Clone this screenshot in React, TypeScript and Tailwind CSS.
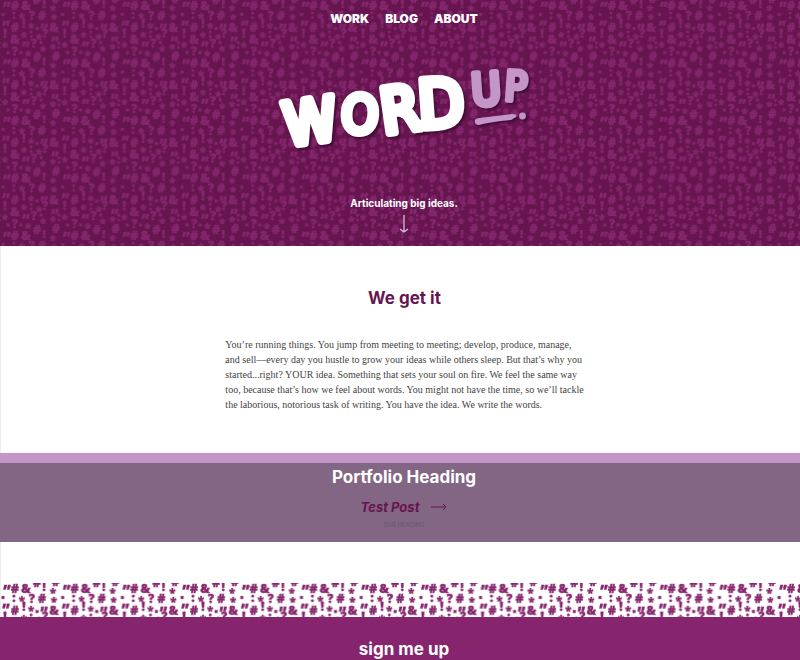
import React from "react";

type Glyph = [string, number, number];

const glyphs: Glyph[] = [
  ["”", 7, 8], ["#", 15, 10], ["&", 26, 10], ["!", 44, 8], ["*", 53, 11], ["¨", 55, 9],
  [":", 14, 19], ["*", 22, 19], ["?", 32, 20], ["#", 42, 20], ["*", 54, 20], ["▪", 3, 18],
  ["”", 6, 27], ["#", 15, 32], ["!", 24, 28], ["*", 31, 29], ["▪", 37, 32], ["”", 44, 30], ["&", 54, 32],
  ["!", 5, 38], ["&", 15, 44], ["*", 24, 38], [":", 31, 38], ["*", 39, 40], ["?", 45, 38], ["”", 55, 43],
  ["*", 5, 48], ["”", 26, 48], ["?", 34, 48], ["▪", 41, 46], ["*", 43, 52], ["*", 53, 50], [":", 59, 49],
  ["▪", 8, 56], ["?", 15, 56], ["▪", 21, 56], ["*", 28, 56], ["#", 37, 61], ["#", 56, 60],
];

function Punctuation({ id, color, className }: { id: string; color: string; className: string }) {
  return (
    <svg aria-hidden="true" className={className}>
      <defs>
        <pattern id={id} width="59.7" height="57.5" patternUnits="userSpaceOnUse">
          {glyphs.flatMap(([char, x, y], i) =>
            [-59.7, 0, 59.7].flatMap((dx) =>
              [-57.5, 0].map((dy) =>
                char === "▪" ? (
                  <rect key={`${i}${dx}${dy}`} x={x + dx - 1.5} y={y + dy - 5} width="3" height="3" fill={color} />
                ) : (
                  <text
                    key={`${i}${dx}${dy}`}
                    x={x + dx}
                    y={y + dy + (char === "*" ? 3 : char === "”" ? 5 : 0)}
                    fill={color}
                    stroke={color}
                    strokeWidth={char === "*" ? 0.2 : 0.4}
                    textAnchor="middle"
                    fontFamily="'Open Sans', sans-serif"
                    fontWeight="800"
                    fontSize={char === "”" ? 15 : 12}
                  >
                    {char}
                  </text>
                ),
              ),
            ),
          )}
        </pattern>
      </defs>
      <rect width="100%" height="100%" fill={`url(#${id})`} />
    </svg>
  );
}

const logo = [
  { char: "W", x: 310, y: 119, size: 59, turn: -8, color: "#ffffff", stroke: 8 },
  { char: "O", x: 360, y: 112, size: 52, turn: 4, color: "#ffffff", stroke: 7 },
  { char: "R", x: 400, y: 107, size: 62, turn: -8, color: "#ffffff", stroke: 8 },
  { char: "D", x: 441, y: 101, size: 66, turn: -4, color: "#ffffff", stroke: 8 },
  { char: "U", x: 486, y: 87, size: 44, turn: -4, color: "#c496c8", stroke: 6 },
  { char: "P", x: 516, y: 84, size: 41, turn: 4, color: "#c496c8", stroke: 5 },
];

function Logo() {
  return (
    <svg role="img" aria-label="Word Up" viewBox="272 56 264 100" className="mt-7 h-[100px] w-[264px] overflow-visible">
      <g style={{ filter: "drop-shadow(2px 2px 1px #3f0b35)" }}>
        {logo.map((l) => (
          <text
            key={l.char}
            x={l.x}
            y={l.y + l.size * 0.36}
            transform={`rotate(${l.turn} ${l.x} ${l.y})`}
            textAnchor="middle"
            fontFamily="'DejaVu Sans Condensed', 'Open Sans', sans-serif"
            fontSize={l.size}
            fontWeight="400"
            fill={l.color}
            stroke={l.color}
            strokeWidth={l.stroke}
            strokeLinejoin="round"
            strokeLinecap="round"
          >
            {l.char}
          </text>
        ))}
        <path d="M398 112Q412 119 428 121" fill="none" stroke="#ffffff" strokeWidth="4" strokeLinecap="round" />
        <path d="M475 118Q476 116 480 116L512 112Q518 112 516 115L511 118Q490 120 479 123Q474 123 475 118Z" fill="#c496c8" />
        <circle cx="522.5" cy="114" r="3.4" fill="#c496c8" />
      </g>
    </svg>
  );
}

export default function App() {
  return (
    <div className="border-l border-[#ededed] bg-white text-center font-['Inter',sans-serif]">
      <header className="relative isolate -ml-px flex h-[246px] flex-col items-center overflow-hidden bg-[#66154f] pl-2">
        <Punctuation id="marks-dark" color="#84266d" className="absolute inset-0 -z-10 h-full w-full" />
        <nav className="flex gap-4 pt-2 text-xs leading-[22px] font-black text-white">
          <a href="#work">WORK</a>
          <a href="#blog">BLOG</a>
          <a href="#about">ABOUT</a>
        </nav>
        <Logo />
        <p className="mt-[35px] text-[10px] leading-5 font-bold text-white">Articulating big ideas.</p>
        <a href="#intro" aria-label="Scroll down" className="mt-0.5">
          <svg className="h-5 w-3" viewBox="0 0 12 20" fill="none" stroke="#d9bdd6" strokeWidth="1.3">
            <path d="M6 0V17M2 14L6 17L10 14" />
          </svg>
        </a>
      </header>
      <main>
        <section id="intro" className="flex flex-col items-center pt-10 pb-[41px] pl-2">
          <h2 className="text-[17px] leading-6 font-bold text-[#66154f]">We get it</h2>
          <p className="mt-[27px] text-left font-['Liberation_Serif',serif] text-[10px] leading-[15px] text-[#444444]">
            You’re running things. You jump from meeting to meeting; develop, produce, manage,
            <br />
            and sell—every day you hustle to grow your ideas while others sleep. But that’s why you
            <br />
            started...right? YOUR idea. Something that sets your soul on fire. We feel the same way
            <br />
            too, because that’s how we feel about words. You might not have the time, so we’ll tackle
            <br />
            the laborious, notorious task of writing. You have the idea. We write the words.
          </p>
        </section>
        <section className="-ml-px border-t-10 border-[#c496c8] bg-[#836684] pt-0.5 pb-[9px] pl-2">
          <h2 className="text-[17px] leading-6 font-bold text-white">Portfolio Heading</h2>
          <a href="#test-post" className="mt-2 flex items-center justify-center gap-3 text-[13px] leading-5 font-bold text-[#66154f] italic">
            Test Post
            <svg aria-hidden="true" className="h-2 w-4" viewBox="0 0 16 8" fill="none" stroke="#66154f">
              <path d="M0 4H15M12 1L15 4L12 7" />
            </svg>
          </a>
          <p className="text-[6px] leading-4 text-[#66576b]">SUB HEADING</p>
        </section>
      </main>
      <footer className="-ml-px mt-[41px]">
        <Punctuation id="marks-light" color="#86256d" className="block h-[34px] w-full" />
        <div className="bg-[#86256d] pt-[22px] pl-2">
          <h2 className="text-[17px] leading-[21px] font-bold text-white">sign me up</h2>
        </div>
      </footer>
    </div>
  );
}
